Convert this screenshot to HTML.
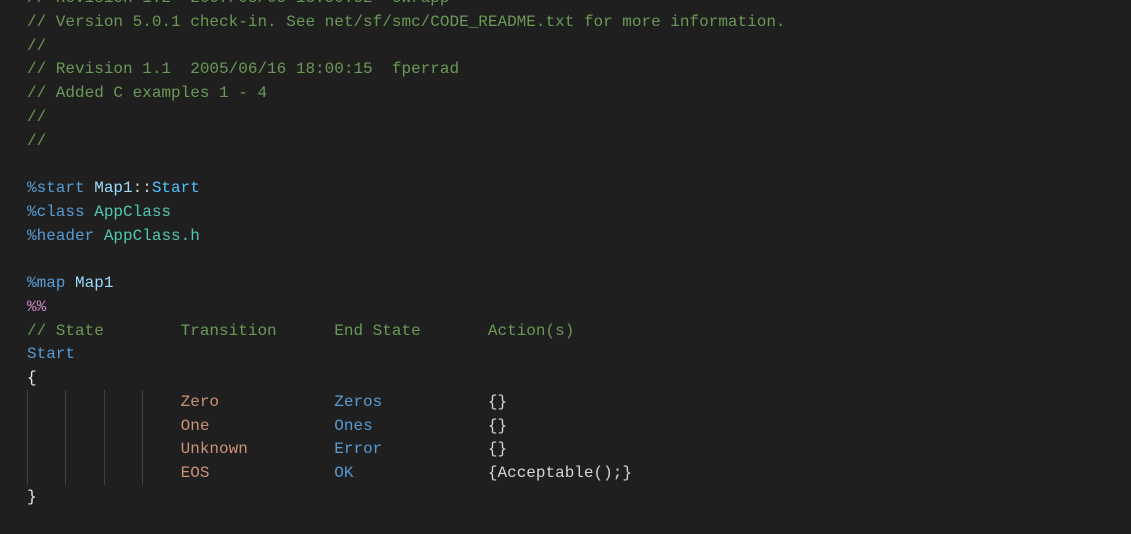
<!DOCTYPE html>
<html><head><style>
body{margin:0;background:#1f1f1f;width:1131px;height:534px;overflow:hidden;position:relative}
pre{margin:0;position:absolute;left:27px;top:-13px;font-family:"Liberation Mono",monospace;font-size:16px;line-height:23.75px;color:#d4d4d4}
.c{color:#6a9955}.k{color:#569cd6}.v{color:#9cdcfe}.t{color:#4ec9b0}.p{color:#c586c0}.s{color:#ce9178}.b{color:#e8e8e8}.l{color:#4fc1ff}
.g{position:absolute;top:390px;height:95px;width:1px;background:#404040}
</style></head><body>
<div class="g" style="left:27px"></div><div class="g" style="left:65px"></div><div class="g" style="left:104px"></div><div class="g" style="left:142px"></div>
<pre><span class="c">// Revision 1.2  2007/08/05 13:50:52  cwrapp
// Version 5.0.1 check-in. See net/sf/smc/CODE_README.txt for more information.
//
// Revision 1.1  2005/06/16 18:00:15  fperrad
// Added C examples 1 - 4
//
//</span>

<span class="k">%start</span> <span class="v">Map1</span>::<span class="l">Start</span>
<span class="k">%class</span> <span class="t">AppClass</span>
<span class="k">%header</span> <span class="t">AppClass.h</span>

<span class="k">%map</span> <span class="v">Map1</span>
<span class="p">%%</span>
<span class="c">// State        Transition      End State       Action(s)</span>
<span class="k">Start</span>
<span class="b">{</span>
                <span class="s">Zero</span>            <span class="k">Zeros</span>           {}
                <span class="s">One</span>             <span class="k">Ones</span>            {}
                <span class="s">Unknown</span>         <span class="k">Error</span>           {}
                <span class="s">EOS</span>             <span class="k">OK</span>              {Acceptable();}
<span class="b">}</span></pre>
</body></html>
